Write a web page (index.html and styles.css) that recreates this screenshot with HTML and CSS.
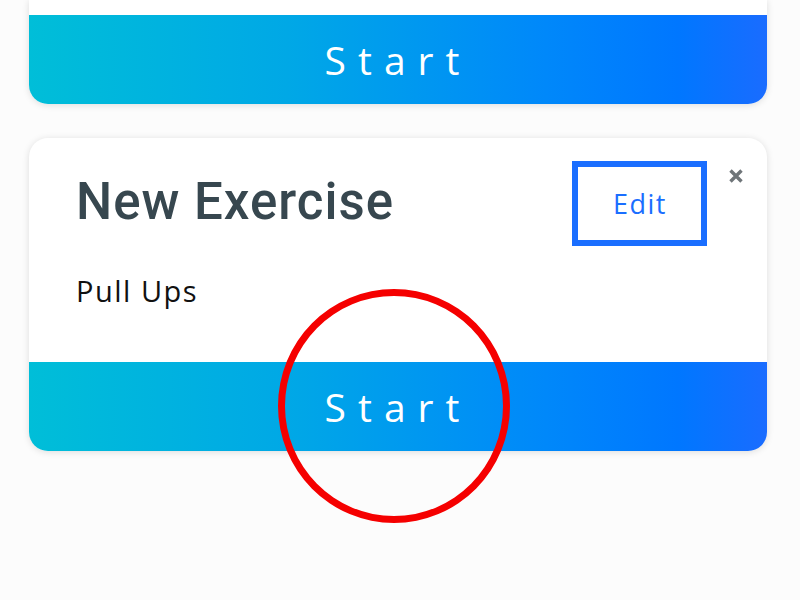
FILE: index.html
```html
<!DOCTYPE html>
<html lang="en">
<head>
<meta charset="utf-8">
<title>Exercises</title>
<link rel="stylesheet" href="styles.css">
</head>
<body>
<main class="list">
  <section class="card card-cut">
    <div class="card-body card-body-cut"></div>
    <button class="start">Start</button>
  </section>
  <section class="card">
    <div class="card-body">
      <div class="card-head">
        <h2 class="title">New Exercise</h2>
        <button class="edit">Edit</button>
        <button class="close" aria-label="Remove"><svg viewBox="0 0 16 16" width="16" height="16"><path d="M2.5 2.5 L13.5 13.5 M13.5 2.5 L2.5 13.5" stroke="#6f7579" stroke-width="3.4" stroke-linecap="butt"/></svg></button>
      </div>
      <p class="desc">Pull Ups</p>
    </div>
    <button class="start">Start</button>
    <div class="ring"></div>
  </section>
</main>
</body>
</html>
```
FILE: styles.css
```css
html, body {
  margin: 0;
  padding: 0;
  background: #fcfcfc;
  height: 100%;
  overflow: hidden;
}
.list {
  display: flex;
  flex-direction: column;
  gap: 34px;
  width: 738px;
  margin: 0 0 0 29px;
}
.card {
  position: relative;
  background: #ffffff;
  border-radius: 19px;
  box-shadow: 0 1px 7px rgba(0, 0, 0, 0.13);
  display: flex;
  flex-direction: column;
}
.card-cut {
  border-radius: 0 0 19px 19px;
}
.card-body {
  height: 224px;
  box-sizing: border-box;
  padding: 23px 23px 0 47px;
}
.card-body-cut {
  height: 15px;
  padding: 0;
}
.card-head {
  display: flex;
  align-items: flex-start;
}
.title {
  flex: 1;
  margin: 16px 0 0 0;
  font-family: Roboto, "Liberation Sans", sans-serif;
  font-weight: 500;
  font-size: 51px;
  line-height: 50px;
  letter-spacing: 1px;
  color: #37474f;
}
.edit {
  width: 135px;
  height: 85px;
  box-sizing: border-box;
  border: 6px solid #1a6eff;
  background: #ffffff;
  color: #1a6eff;
  font-family: "Open Sans", sans-serif;
  font-size: 27px;
  letter-spacing: 1.5px;
  padding: 0 0 0 1px;
  margin: 0 21px 0 0;
  display: flex;
  align-items: center;
  justify-content: center;
}
.close {
  border: 0;
  background: none;
  padding: 0;
  margin: 7px 0 0 0;
  width: 16px;
  height: 16px;
  display: block;
}
.close svg {
  display: block;
}
.desc {
  margin: 30px 0 0 0;
  font-family: "Open Sans", sans-serif;
  font-size: 29px;
  line-height: 30px;
  letter-spacing: 1.5px;
  color: #111111;
}
.start {
  height: 89px;
  border: 0;
  padding: 0;
  width: 100%;
  border-radius: 0 0 19px 19px;
  background: linear-gradient(90deg, #00bed8 0%, #00a8e6 35%, #0088fa 70%, #0077ff 88%, #1a6cff 100%);
  color: #ffffff;
  font-family: "Open Sans", sans-serif;
  font-size: 39px;
  letter-spacing: 12px;
  line-height: 89px;
}
.ring {
  position: absolute;
  left: 249px;
  top: 151px;
  width: 232px;
  height: 234px;
  box-sizing: border-box;
  border: 7px solid #f50000;
  border-radius: 50%;
  pointer-events: none;
}
```
